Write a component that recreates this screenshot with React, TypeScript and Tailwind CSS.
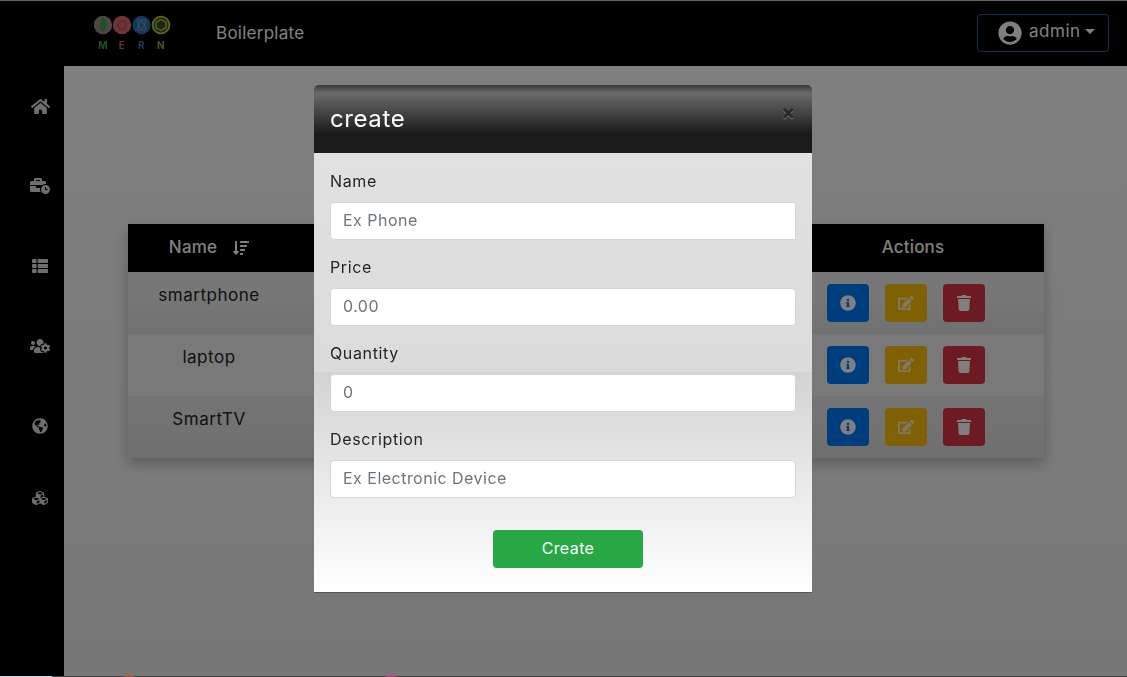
import {
  FaBusinessTime,
  FaCubes,
  FaEdit,
  FaGlobeAmericas,
  FaHome,
  FaInfoCircle,
  FaSortAmountDown,
  FaThList,
  FaTrash,
  FaUserCircle,
  FaUsersCog,
} from "react-icons/fa";

const products = [
  { name: "smartphone", bg: "bg-[linear-gradient(#eeeeee_40%,#e2e2e2)]" },
  { name: "laptop", bg: "bg-[#f2f2f2]" },
  { name: "SmartTV", bg: "bg-[linear-gradient(#e6e6e6_40%,#dedede)]" },
];

const fields = [
  { label: "Name", placeholder: "Ex Phone", corners: "rounded-l rounded-r-none" },
  { label: "Price", placeholder: "0.00", corners: "rounded" },
  { label: "Quantity", placeholder: "0", corners: "rounded" },
  { label: "Description", placeholder: "Ex Electronic Device", corners: "rounded" },
];

const sideIcons = [
  { icon: FaHome, size: 19, row: "h-[80px]" },
  { icon: FaBusinessTime, size: 20, row: "h-[80px]" },
  { icon: FaThList, size: 16, row: "h-[80px]" },
  { icon: FaUsersCog, size: 20, row: "h-[80px]" },
  { icon: FaGlobeAmericas, size: 16, row: "h-[80px]" },
  { icon: FaCubes, size: 16, row: "h-[64px]" },
];

const MernLogo = () => (
  <svg width="78" height="42" viewBox="0 0 78 42" aria-label="MERN" className="blur-[0.4px]">
    <circle cx="9" cy="11" r="9.200" fill="#9a8d84" />
    <path d="M9 3c4.200 3 4.700 11 0 16c-4.700-5-4.200-13 0-16z" fill="#3fa34d" />
    <circle cx="28" cy="11" r="9.200" fill="#dc6a6e" />
    <circle cx="28" cy="11" r="4.200" fill="none" stroke="#c24c50" strokeWidth="1.500" />
    <circle cx="47.500" cy="11" r="9.200" fill="#2a6ca8" />
    <ellipse cx="47.500" cy="11" rx="6.500" ry="2.500" fill="none" stroke="#7fb4dc" strokeWidth="0.800" transform="rotate(60 47.500 11)" />
    <ellipse cx="47.500" cy="11" rx="6.500" ry="2.500" fill="none" stroke="#7fb4dc" strokeWidth="0.800" transform="rotate(-60 47.500 11)" />
    <circle cx="67" cy="11" r="8.400" fill="#3c4a1c" stroke="#b5cf3c" strokeWidth="1.800" />
    <path d="M67 5.500l5 2.800v5.400l-5 2.800l-5-2.800V8.300z" fill="none" stroke="#b5cf3c" strokeWidth="1.400" />
    <text x="9" y="35" textAnchor="middle" fontSize="10" fontWeight="700" fill="#3fa34d">M</text>
    <text x="28" y="35" textAnchor="middle" fontSize="10" fontWeight="700" fill="#c95a5e">E</text>
    <text x="47.500" y="35" textAnchor="middle" fontSize="10" fontWeight="700" fill="#2f78b8">R</text>
    <text x="67" y="35" textAnchor="middle" fontSize="10" fontWeight="700" fill="#8fb52f">N</text>
  </svg>
);

const CreateModal = () => (
  <div className="fixed inset-0 z-10 flex justify-center bg-black/50 pt-[85px]">
    <div className="ml-[-1px] h-[508px] w-[498px] self-start overflow-hidden rounded-t-[5px] border-b border-[#555555]">
      <div className="flex h-[68px] items-start justify-between bg-[linear-gradient(#383838,#6a6a6a_12%,#555555_28%,#1a1a1a_72%,#1c1c1c)] px-4 pt-[16px]">
        <h5 className="text-2xl leading-9 font-normal tracking-[0.025em] text-white">create</h5>
        <span className="mt-[-6px] text-[21px] leading-9 font-bold text-[#2a2a2a] [text-shadow:0_1px_0_#777777]">×</span>
      </div>
      <form className="h-[439px] bg-[linear-gradient(#e1e1e1,#dbdbdb_50%,#d3d3d3_50%,#ffffff)] px-4 pt-4">
        {fields.map((field) => (
          <div key={field.label} className="mb-[15px]">
            <label className="mb-[9px] block text-base leading-6 tracking-[0.04em] text-[#212529]">{field.label}</label>
            <input
              readOnly
              placeholder={field.placeholder}
              className={`block h-[38px] w-full border border-[#d6d6d6] bg-white px-3 pb-[2px] text-base tracking-[0.03em] text-[#495057] placeholder:text-[#6c757d] ${field.corners}`}
            />
          </div>
        ))}
        <button
          type="button"
          className="mt-[17px] ml-[163px] h-[38px] w-[150px] rounded bg-[#28a745] pb-[2px] text-base text-white"
        >
          Create
        </button>
      </form>
    </div>
  </div>
);

const App = () => {
  return (
    <div className="relative flex h-screen flex-col overflow-hidden bg-white font-['Inter','Liberation_Sans',sans-serif] tracking-[0.025em]">
      <div className="h-px bg-[#cccccc]" />
      <nav className="flex h-[65px] shrink-0 items-center bg-black">
        <div className="mt-[3px] ml-[94px]">
          <MernLogo />
        </div>
        <span className="ml-[44px] text-[17px] tracking-[0.015em] text-white">Boilerplate</span>
        <button
          type="button"
          className="mt-[-2px] mr-[18px] ml-auto flex h-[38px] w-[132px] items-center rounded border border-[#2a5caa] pl-5 text-white"
        >
          <FaUserCircle size={24} />
          <span className="mt-[-1px] ml-[7px] text-[17px] tracking-[0.03em]">admin</span>
          <span className="mt-[-3px] ml-1 border-x-[5px] border-t-[5px] border-x-transparent border-t-white" />
        </button>
      </nav>

      <div className="flex flex-1">
        <aside className="w-16 shrink-0 bg-black pl-4">
          {sideIcons.map(({ icon: Icon, size, row }, i) => (
            <div key={i} className={`flex items-center justify-center text-[#dddddd] ${row}`}>
              <Icon size={size} />
            </div>
          ))}
        </aside>

        <main className="flex-1 bg-[linear-gradient(#ffffff,#eeeeee)] pt-[158px] pr-[83px] pl-16">
          <div className="shadow-[0_5px_12px_rgba(0,0,0,0.25)]">
            <div className="flex h-12 items-center bg-black text-[17px] font-medium tracking-[0.01em] text-white">
              <div className="flex w-[162px] items-center justify-center gap-4">
                <span>Name</span>
                <FaSortAmountDown size={16} />
              </div>
              <div className="flex-1" />
              <div className="mr-[33px] w-[196px] text-center">Actions</div>
            </div>
            {products.map((product) => (
              <div key={product.name} className={`flex h-[62px] text-[17px] tracking-[0.03em] text-[#212529] ${product.bg}`}>
                <div className="w-[162px] pt-[11px] text-center leading-6">{product.name}</div>
                <div className="flex-1" />
                <div className="mr-[33px] flex w-[196px] gap-4 pt-3 pl-3">
                  <button type="button" className="flex h-[38px] w-[42px] items-center justify-center rounded bg-[#007bff] text-white">
                    <FaInfoCircle size={16} />
                  </button>
                  <button type="button" className="flex h-[38px] w-[42px] items-center justify-center rounded bg-[#ffc107] text-[#fff3cd]">
                    <FaEdit size={16} />
                  </button>
                  <button type="button" className="flex h-[38px] w-[42px] items-center justify-center rounded bg-[#dc3545] text-white">
                    <FaTrash size={16} />
                  </button>
                </div>
              </div>
            ))}
          </div>
        </main>
      </div>

      <CreateModal />
      <div className="absolute right-0 bottom-0 left-[52px] z-20 h-px bg-[#444444]" />
      <div className="absolute bottom-0 left-0 z-20 h-px w-[52px] bg-[#cfd8e0]" />
      <div className="absolute bottom-0 left-[124px] z-20 h-px w-[10px] bg-[#c0392b]" />
      <div className="absolute bottom-0 left-[386px] z-20 h-px w-[10px] bg-[#c2267a]" />
    </div>
  );
};

export default App;
